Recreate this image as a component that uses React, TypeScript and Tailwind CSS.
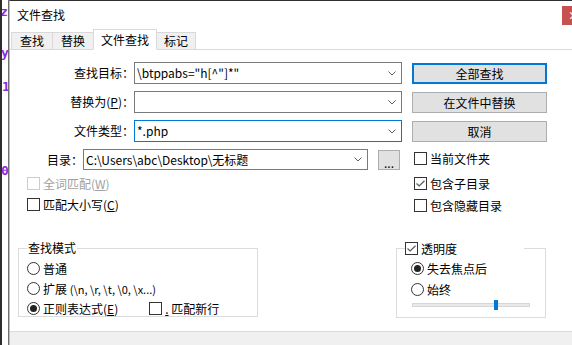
import React from "react";

type ComboProps = {
  value?: string;
  className?: string;
  focused?: boolean;
};

function Chevron() {
  return (
    <svg width="8" height="5" viewBox="0 0 8 5" className="shrink-0">
      <path d="M0.5 0.5 L4 4 L7.5 0.5" fill="none" stroke="#5f5f5f" strokeWidth="1" />
    </svg>
  );
}

function Combo({ value, className, focused }: ComboProps) {
  return (
    <div
      className={`flex items-center bg-white border pl-[2px] pr-[5px] ${
        focused ? "border-[#0078d7]" : "border-[#7a7a7a]"
      } ${className}`}
    >
      <span className="flex-1 whitespace-nowrap overflow-hidden leading-[14px]">{value}</span>
      <Chevron />
    </div>
  );
}

function Button({
  children,
  className,
  primary,
}: {
  children: React.ReactNode;
  className?: string;
  primary?: boolean;
}) {
  return (
    <div
      className={`flex items-center justify-center bg-[#e1e1e1] leading-[14px] ${
        primary ? "border-2 border-[#0078d7]" : "border border-[#adadad]"
      } ${className}`}
    >
      {children}
    </div>
  );
}

function CheckBox({
  checked,
  disabled,
  children,
  className,
}: {
  checked?: boolean;
  disabled?: boolean;
  children: React.ReactNode;
  className?: string;
}) {
  return (
    <div className={`flex items-center h-[13px] ${className ?? ""}`}>
      <span
        className={`w-[13px] h-[13px] bg-white border flex items-center justify-center shrink-0 ${
          disabled ? "border-[#cccccc]" : "border-[#333333]"
        }`}
      >
        {checked && (
          <svg width="9" height="7" viewBox="0 0 9 7">
            <path d="M0.5 3.5 L3.2 6 L8.5 0.8" fill="none" stroke="#5a5a5a" strokeWidth="1.2" />
          </svg>
        )}
      </span>
      <span className={`ml-[3px] leading-[13px] whitespace-nowrap ${disabled ? "text-[#a0a0a0]" : ""}`}>
        {children}
      </span>
    </div>
  );
}

function Radio({ checked, children }: { checked?: boolean; children: React.ReactNode }) {
  return (
    <div className="flex items-center h-[13px]">
      <span className="w-[13px] h-[13px] rounded-full bg-white border border-[#333333] flex items-center justify-center shrink-0">
        {checked && <span className="w-[7px] h-[7px] rounded-full bg-[#222222]" />}
      </span>
      <span className="ml-[3px] leading-[13px] whitespace-nowrap">{children}</span>
    </div>
  );
}

export default function App() {
  return (
    <div className="w-[572px] h-[345px] overflow-hidden flex bg-white text-black text-[12px] font-['Noto_Sans_CJK_SC','Noto_Sans',sans-serif]">
      {/* editor behind the dialog */}
      <div className="w-[2px] bg-[#2d2d2d]" />
      <div className="w-[6px] bg-white overflow-hidden flex flex-col font-['DejaVu_Sans_Mono',monospace] font-bold text-[13px] leading-[14px] text-[#8a2be2]">
        <span className="mt-[5px] -ml-[2px]">z</span>
        <span className="mt-[27px] -ml-[1px]">y</span>
        <span className="mt-[20px]">1</span>
        <span className="mt-[70px] -ml-[1px]">0</span>
      </div>
      <div className="w-[1px] bg-[#6e6e6e]" />

      {/* dialog */}
      <div className="flex-1 flex flex-col border-t border-l border-[#2f2f2f] border-l-[#bcbcbc] min-w-0">
        <div className="h-[27px] flex items-start shrink-0">
          <span className="pl-[7px] leading-[27px]">文件查找</span>
          <div className="flex-1" />
          <div className="mt-[5px] w-[10px] h-[19px] bg-[#c75050] overflow-hidden flex items-center">
            <span className="ml-[6px] text-white text-[11px] font-bold leading-none">×</span>
          </div>
        </div>

        {/* tabs */}
        <div className="h-[22px] flex items-end pl-[1px] border-b border-[#d9d9d9] shrink-0">
          <div className="-mb-px w-[42px] h-[18px] flex items-center justify-center bg-[#f0f0f0] border border-[#d9d9d9]">
            查找
          </div>
          <div className="-mb-px -ml-px w-[42px] h-[18px] flex items-center justify-center bg-[#f0f0f0] border border-[#d9d9d9]">
            替换
          </div>
          <div className="-mb-px -ml-px relative z-10 w-[64px] h-[21px] flex items-center justify-center bg-white border border-[#d9d9d9] border-b-white">
            文件查找
          </div>
          <div className="-mb-px -ml-px w-[40px] h-[18px] flex items-center justify-center bg-[#f0f0f0] border border-[#d9d9d9]">
            标记
          </div>
        </div>

        {/* body */}
        <div className="flex-1 flex flex-col pt-[12px]">
          <div className="flex flex-col gap-[7px]">
            <div className="flex items-start h-[22px]">
              <div className="w-[124px] text-right leading-[22px]">查找目标：</div>
              <Combo className="w-[268px] h-[22px]" value={'\\btppabs="h[^"]*"'} />
              <Button primary className="ml-[10px] mt-[1px] w-[135px] h-[21px]">
                全部查找
              </Button>
            </div>
            <div className="flex items-start h-[22px]">
              <div className="w-[124px] text-right leading-[22px]">
                替换为(<span className="underline">P</span>)：
              </div>
              <Combo className="w-[268px] h-[22px]" />
              <Button className="ml-[10px] mt-[1px] w-[135px] h-[21px]">在文件中替换</Button>
            </div>
            <div className="flex items-start h-[22px]">
              <div className="w-[124px] text-right leading-[22px]">文件类型：</div>
              <Combo focused className="w-[268px] h-[22px]" value="*.php" />
              <Button className="ml-[10px] mt-[1px] w-[135px] h-[21px]">取消</Button>
            </div>
            <div className="flex items-start h-[21px]">
              <div className="w-[73px] text-right leading-[21px]">目录：</div>
              <Combo className="w-[285px] h-[21px]" value={"C:\\Users\\abc\\Desktop\\无标题"} />
              <Button className="ml-[10px] mt-[1px] w-[22px] h-[20px] items-end pb-[1px]">
                <span className="leading-[10px]">...</span>
              </Button>
              <CheckBox className="ml-[14px] mt-[3px]">当前文件夹</CheckBox>
            </div>
          </div>

          <div className="flex mt-[7px]">
            <div className="w-[387px] ml-[17px] flex flex-col gap-[8px]">
              <CheckBox disabled>
                全词匹配(<span className="underline">W</span>)
              </CheckBox>
              <CheckBox>
                匹配大小写(<span className="underline">C</span>)
              </CheckBox>
            </div>
            <div className="flex flex-col gap-[9px]">
              <CheckBox checked>包含子目录</CheckBox>
              <CheckBox>包含隐藏目录</CheckBox>
            </div>
          </div>

          {/* groups */}
          <div className="flex items-start mt-[29px]">
            <fieldset className="ml-[8px] w-[240px] border border-[#dcdcdc] pl-[8px] pb-[1px]">
              <legend className="px-[1px] leading-[14px]">查找模式</legend>
              <div className="flex flex-col gap-[7px] pt-[7px]">
                <Radio>普通</Radio>
                <Radio>
                  扩展 <span className="text-[11px]">(\n, \r, \t, \0, \x...)</span>
                </Radio>
                <div className="flex items-center">
                  <Radio checked>
                    正则表达式(<span className="underline">E</span>)
                  </Radio>
                  <CheckBox className="ml-[31px]">
                    <span className="underline">.</span> 匹配新行
                  </CheckBox>
                </div>
              </div>
            </fieldset>

            <fieldset className="ml-[138px] w-[150px] border border-[#dcdcdc] pl-[14px] pb-[7px]">
              <legend className="-ml-[6px] w-[119px] bg-white leading-[14px]">
                <CheckBox checked className="h-[14px]">透明度</CheckBox>
              </legend>
              <div className="flex flex-col pt-[7px]">
                <Radio checked>失去焦点后</Radio>
                <div className="mt-[8px]">
                  <Radio>始终</Radio>
                </div>
                <div className="relative mt-[4px] w-[118px] h-[10px] flex items-center ml-[1px]">
                  <div className="w-full h-[4px] bg-[#e7eaea] border border-[#d6d6d6]" />
                  <div className="absolute left-[82px] top-0 w-[4px] h-[10px] bg-[#0078d7]" />
                </div>
              </div>
            </fieldset>
          </div>
        </div>

        <div className="h-[14px] border-t border-[#dadada] bg-[#f0f0f0] shrink-0" />
      </div>
    </div>
  );
}
